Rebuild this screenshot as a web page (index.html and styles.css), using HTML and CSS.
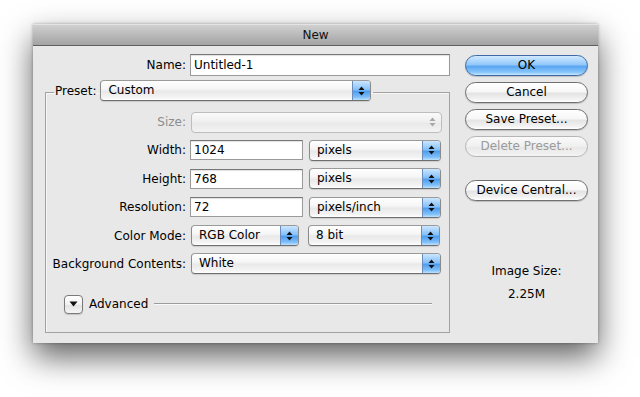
FILE: index.html
```html
<!DOCTYPE html>
<html>
<head>
<meta charset="utf-8">
<title>New</title>
<link rel="stylesheet" href="styles.css">
</head>
<body>
<div class="dialog">
  <div class="titlebar">New</div>
  <div class="content">
    <div class="left">
      <div class="name-row">
        <span class="lbl name-lbl">Name:</span>
        <div class="field name-field">Untitled-1</div>
      </div>
      <fieldset class="preset">
        <legend class="legend">
          <span class="lbl">Preset:</span>
          <div class="popup w-preset"><span class="val">Custom</span><span class="arrows"><svg width="7" height="10" viewBox="0 0 7 10"><path d="M3.5 0.5L6.5 4H0.5Z M0.5 6H6.5L3.5 9.5Z"/></svg></span></div>
        </legend>
        <div class="grid">
          <span class="lbl dim">Size:</span>
          <div class="ctrls"><div class="popup disabled w-size"><span class="val"></span><span class="arrows"><svg width="7" height="10" viewBox="0 0 7 10"><path d="M3.5 0.5L6.5 4H0.5Z M0.5 6H6.5L3.5 9.5Z"/></svg></span></div></div>

          <span class="lbl">Width:</span>
          <div class="ctrls"><div class="field w-num">1024</div><div class="popup w-unit"><span class="val">pixels</span><span class="arrows"><svg width="7" height="10" viewBox="0 0 7 10"><path d="M3.5 0.5L6.5 4H0.5Z M0.5 6H6.5L3.5 9.5Z"/></svg></span></div></div>

          <span class="lbl">Height:</span>
          <div class="ctrls"><div class="field w-num">768</div><div class="popup w-unit"><span class="val">pixels</span><span class="arrows"><svg width="7" height="10" viewBox="0 0 7 10"><path d="M3.5 0.5L6.5 4H0.5Z M0.5 6H6.5L3.5 9.5Z"/></svg></span></div></div>

          <span class="lbl">Resolution:</span>
          <div class="ctrls"><div class="field w-num">72</div><div class="popup w-unit"><span class="val">pixels/inch</span><span class="arrows"><svg width="7" height="10" viewBox="0 0 7 10"><path d="M3.5 0.5L6.5 4H0.5Z M0.5 6H6.5L3.5 9.5Z"/></svg></span></div></div>

          <span class="lbl">Color Mode:</span>
          <div class="ctrls"><div class="popup w-mode"><span class="val">RGB Color</span><span class="arrows"><svg width="7" height="10" viewBox="0 0 7 10"><path d="M3.5 0.5L6.5 4H0.5Z M0.5 6H6.5L3.5 9.5Z"/></svg></span></div><div class="popup w-unit"><span class="val">8 bit</span><span class="arrows"><svg width="7" height="10" viewBox="0 0 7 10"><path d="M3.5 0.5L6.5 4H0.5Z M0.5 6H6.5L3.5 9.5Z"/></svg></span></div></div>

          <span class="lbl">Background Contents:</span>
          <div class="ctrls"><div class="popup w-bg"><span class="val">White</span><span class="arrows"><svg width="7" height="10" viewBox="0 0 7 10"><path d="M3.5 0.5L6.5 4H0.5Z M0.5 6H6.5L3.5 9.5Z"/></svg></span></div></div>
        </div>
        <div class="advanced">
          <div class="disclosure"><svg width="9" height="6" viewBox="0 0 9 6"><path d="M0.5 0.5H8.5L4.5 5.5Z"/></svg></div>
          <span class="adv-text">Advanced</span>
          <div class="sep"></div>
        </div>
      </fieldset>
    </div>
    <div class="right">
      <div class="btn default">OK</div>
      <div class="btn">Cancel</div>
      <div class="btn">Save Preset...</div>
      <div class="btn off">Delete Preset...</div>
      <div class="btn gap">Device Central...</div>
      <div class="info">
        <div>Image Size:</div>
        <div>2.25M</div>
      </div>
    </div>
  </div>
</div>
</body>
</html>
```

FILE: styles.css
```css
html, body {
  margin: 0;
  padding: 0;
  background: #ffffff;
}
body {
  width: 640px;
  height: 397px;
  overflow: hidden;
  font-family: "DejaVu Sans", "Liberation Sans", sans-serif;
  font-size: 12px;
  color: #000;
  padding-top: 24px;
  box-sizing: border-box;
}
.dialog {
  margin-left: 33px;
  width: 565px;
  height: 319px;
  background: #e8e8e8;
  box-shadow: 0 14px 30px rgba(0,0,0,0.62), 0 0 3px rgba(0,0,0,0.3);
  display: flex;
  flex-direction: column;
}
.titlebar {
  height: 21px;
  border-bottom: 1px solid #5f5f5f;
  background: linear-gradient(#d2d2d2, #a3a3a3);
  box-shadow: inset 0 1px 0 #e4e4e4;
  text-align: center;
  line-height: 22px;
  font-size: 12px;
  color: #111;
  flex: none;
}
.content {
  display: flex;
  flex: 1;
}
.left {
  width: 417px;
  padding-top: 8px;
}
.name-row {
  display: flex;
  align-items: center;
  gap: 4px;
}
.lbl {
  white-space: nowrap;
}
.name-lbl {
  width: 153px;
  text-align: right;
}
.dim {
  color: #8c8c8c;
}
.field {
  box-sizing: border-box;
  height: 20px;
  background: #fff;
  border: 1px solid #9a9a9a;
  border-top-color: #777;
  box-shadow: inset 0 1px 1px rgba(0,0,0,0.12);
  padding: 0 3px;
  line-height: 18px;
  font-size: 12px;
}
.name-field {
  width: 260px;
  height: 22px;
  line-height: 20px;
}
.preset {
  margin: 4px 0 0 12px;
  width: 405px;
  box-sizing: border-box;
  border: 1px solid #a2a2a2;
  box-shadow: inset 1px 1px 0 #f6f6f6;
  padding: 8px 0 18px 0;
  min-inline-size: 0;
}
.legend {
  margin-left: 8px;
  padding: 0 2px 3px 1px;
  display: flex;
  align-items: center;
  gap: 4px;
}
.popup {
  box-sizing: border-box;
  height: 21px;
  border: 1px solid #8b8b8b;
  border-top-color: #9a9a9a;
  border-bottom-color: #6e6e6e;
  border-radius: 4px;
  background: linear-gradient(#ffffff 0%, #f6f6f6 40%, #e9e9e9 55%, #f3f3f3 85%, #ffffff 100%);
  display: flex;
  align-items: stretch;
  overflow: hidden;
  box-shadow: 0 1px 1px rgba(0,0,0,0.12);
}
.popup .val {
  flex: 1;
  padding-left: 7px;
  line-height: 19px;
  white-space: nowrap;
}
.popup .arrows {
  width: 17px;
  flex: none;
  border-left: 1px solid #6c8dbb;
  background: linear-gradient(#cbe6ff 0%, #86c1f9 45%, #4f9eef 55%, #7fbff9 85%, #bfe2ff 100%);
  display: flex;
  align-items: center;
  justify-content: center;
}
.popup .arrows svg path {
  fill: #111;
}
.popup.disabled {
  border-color: #bdbdbd;
  background: linear-gradient(#fafafa, #eeeeee 50%, #e9e9e9 55%, #f3f3f3);
  box-shadow: none;
}
.popup.disabled .arrows {
  background: none;
  border-left: none;
}
.popup.disabled .arrows svg path {
  fill: #a8a8a8;
}
.w-preset { width: 271px; }
.w-size { width: 251px; margin-left: 1px; }
.w-unit { width: 132px; }
.w-mode { width: 108px; margin-left: 1px; margin-right: 3px; }
.w-bg { width: 250px; margin-left: 1px; }
.w-num { width: 113px; }
.grid {
  display: grid;
  grid-template-columns: 140px 1fr;
  column-gap: 4px;
  row-gap: 8.4px;
  align-items: center;
}
.grid > .lbl {
  text-align: right;
}
.ctrls {
  display: flex;
  align-items: center;
  gap: 6px;
  height: 20px;
}
.advanced {
  display: flex;
  align-items: center;
  margin-top: 21px;
  padding-left: 18px;
  padding-right: 17px;
  height: 19px;
}
.disclosure {
  box-sizing: border-box;
  width: 19px;
  height: 19px;
  border: 1px solid #7a7a7a;
  border-radius: 4px;
  background: linear-gradient(#ffffff, #f1f1f1 50%, #e2e2e2 55%, #f6f6f6);
  box-shadow: 0 1px 1px rgba(0,0,0,0.15);
  display: flex;
  align-items: center;
  justify-content: center;
}
.disclosure svg path {
  fill: #111;
}
.adv-text {
  margin-left: 6px;
  white-space: nowrap;
}
.sep {
  flex: 1;
  margin-left: 6px;
  height: 0;
  border-top: 1px solid #9c9c9c;
  border-bottom: 1px solid #f8f8f8;
}
.right {
  margin-left: auto;
  margin-right: 10px;
  width: 123px;
  padding-top: 9px;
  display: flex;
  flex-direction: column;
}
.btn {
  box-sizing: border-box;
  height: 21px;
  margin-bottom: 6px;
  border: 1px solid #6f6f6f;
  border-radius: 11px;
  background: linear-gradient(#ffffff 0%, #f7f7f7 45%, #e4e4e4 55%, #f2f2f2 85%, #ffffff 100%);
  box-shadow: 0 1px 1px rgba(0,0,0,0.18);
  text-align: center;
  line-height: 19px;
  white-space: nowrap;
}
.btn.default {
  border-color: #3d6aa5;
  background: linear-gradient(#d0e9ff 0%, #93c8fa 45%, #5aa6f1 55%, #86c5fb 85%, #c6e7ff 100%);
}
.btn.off {
  border-color: #b5b5b5;
  color: #9a9a9a;
  box-shadow: none;
  background: linear-gradient(#fafafa, #efefef 50%, #e8e8e8 55%, #f4f4f4);
}
.btn.gap {
  margin-top: 17px;
}
.info {
  margin-top: 53px;
  text-align: center;
  line-height: 23px;
}
```
